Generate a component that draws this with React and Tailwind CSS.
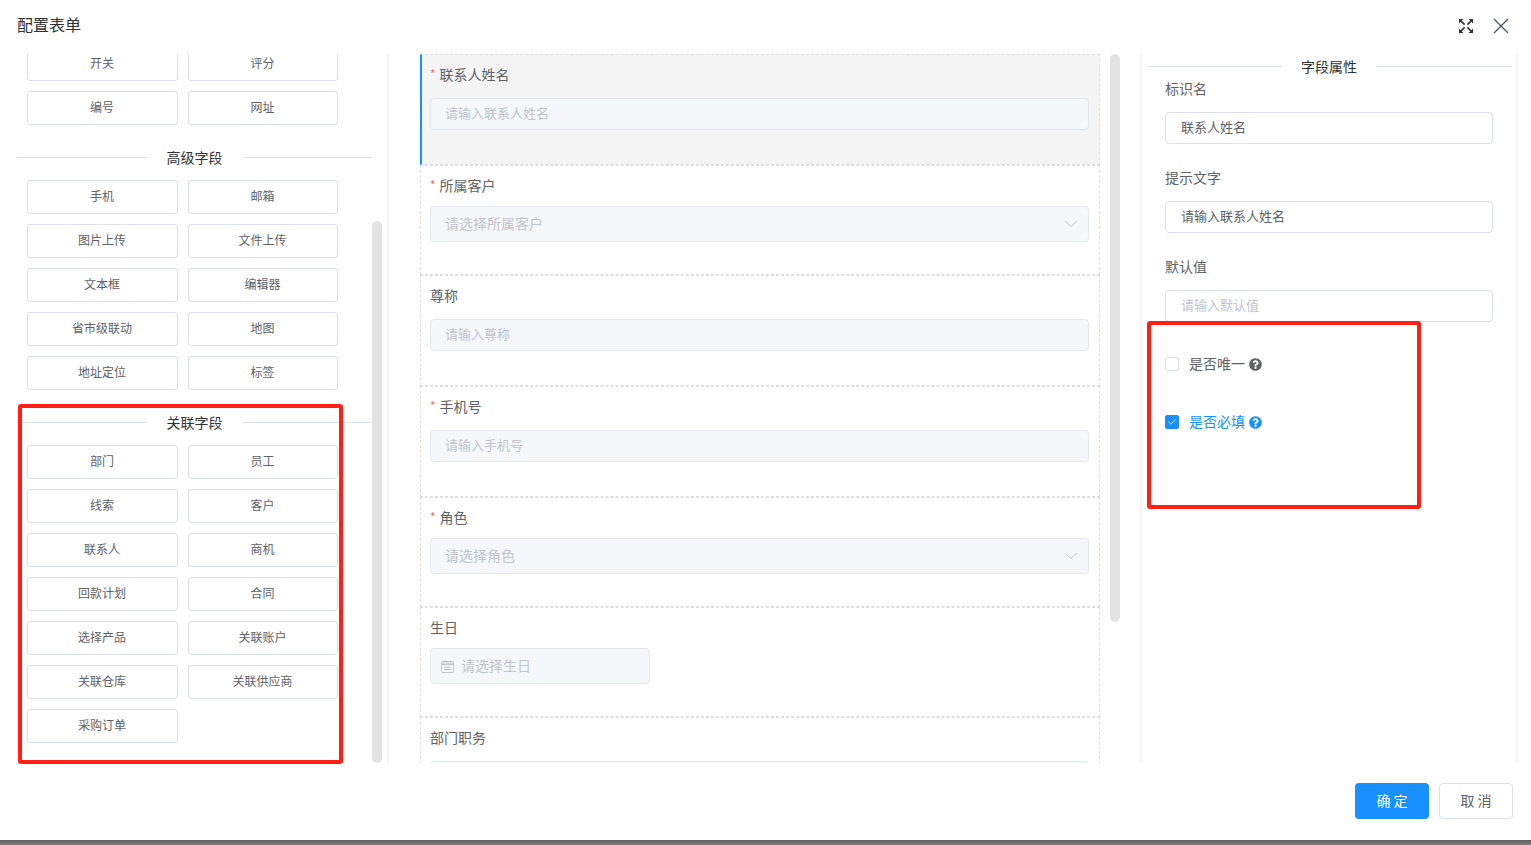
import { ChevronDown, Check } from 'lucide-react';
import { FaQuestionCircle } from 'react-icons/fa';

const basicTail = ['开关', '评分', '编号', '网址'];
const advanced = ['手机', '邮箱', '图片上传', '文件上传', '文本框', '编辑器', '省市级联动', '地图', '地址定位', '标签'];
const relation = ['部门', '员工', '线索', '客户', '联系人', '商机', '回款计划', '合同', '选择产品', '关联账户', '关联仓库', '关联供应商', '采购订单'];

const fields = [
  { label: '联系人姓名', required: true, type: 'input', placeholder: '请输入联系人姓名', active: true },
  { label: '所属客户', required: true, type: 'select', placeholder: '请选择所属客户' },
  { label: '尊称', type: 'input', placeholder: '请输入尊称' },
  { label: '手机号', required: true, type: 'input', placeholder: '请输入手机号' },
  { label: '角色', required: true, type: 'select', placeholder: '请选择角色' },
  { label: '生日', type: 'date', placeholder: '请选择生日' },
  { label: '部门职务', type: 'input', placeholder: '' },
];

function Divider({ title, className }) {
  return (
    <div className={`flex items-center ${className}`}>
      <div className="h-px flex-1 bg-[#dcdfe6]" />
      <span className="px-5 text-sm leading-5 text-[#303133]">{title}</span>
      <div className="h-px flex-1 bg-[#dcdfe6]" />
    </div>
  );
}

function ButtonGrid({ items }) {
  return (
    <div className="ml-[10px] grid grid-cols-[151px_150px] gap-x-[10px] gap-y-[10px]">
      {items.map((name) => (
        <button key={name} className="h-[34px] rounded-[3px] border border-[#dcdfe6] bg-white pb-[2px] pr-px text-xs text-[#606266]">
          {name}
        </button>
      ))}
    </div>
  );
}

function ExpandIcon() {
  return (
    <svg width="14" height="14" viewBox="0 0 14 14" fill="#303133" stroke="#303133">
      <path d="M0 0h4.5L0 4.5z" strokeWidth="0" />
      <path d="M14 0H9.5L14 4.5z" strokeWidth="0" />
      <path d="M0 14h4.5L0 9.5z" strokeWidth="0" />
      <path d="M14 14H9.5L14 9.5z" strokeWidth="0" />
      <path d="M2 2l3.6 3.6M12 2L8.4 5.6M2 12l3.6-3.6M12 12L8.4 8.4" strokeWidth="1.7" />
    </svg>
  );
}

function CalendarIcon() {
  return (
    <svg width="13" height="13" viewBox="0 0 13 13" fill="none" stroke="#c0c4cc">
      <rect x="0.5" y="1.5" width="12" height="11" rx="1" />
      <path d="M0.5 3h12M0.5 4.5h12M3 7h7M3 9.5h7" />
      <path d="M3.5 0v2M9.5 0v2" />
    </svg>
  );
}

function FieldRow({ field }) {
  const inputBox = 'rounded-[4px] border border-[#e4e7ed] bg-[#f5f7fa]';
  const height = field.type === 'input' ? 'h-[111px]' : 'h-[110px]';
  return (
    <div
      className={`${height} border-y border-r border-dashed border-[#dedede] pr-[10px] ${
        field.active
          ? 'border-l-2 bg-[#f4f4f4] pl-[8px] [border-left-color:#1890ff] [border-left-style:solid]'
          : 'border-l pl-[9px]'
      }`}
    >
      <div className="flex items-center pt-[9px] text-sm leading-5 text-[#606266]">
        {field.required && <span className="mr-1 text-xs text-[#f56c6c]">*</span>}
        {field.label}
      </div>
      {field.type === 'input' && (
        <input
          disabled
          placeholder={field.placeholder}
          className={`mt-[14px] block h-8 w-full pb-[4px] pl-[14px] pr-[15px] text-[13px] placeholder:text-[#c0c4cc] ${inputBox}`}
        />
      )}
      {field.type === 'select' && (
        <div className={`mt-[11px] flex h-9 w-full items-center justify-between pb-[2px] pl-[14px] pr-[6px] text-sm text-[#c0c4cc] ${inputBox}`}>
          <span>{field.placeholder}</span>
          <ChevronDown size={22} strokeWidth={1} className="mt-[2px]" />
        </div>
      )}
      {field.type === 'date' && (
        <div className={`mt-[11px] flex h-9 w-[220px] items-center gap-[7px] pl-[10px] text-[#c0c4cc] ${inputBox}`}>
          <CalendarIcon />
          <span className="-mt-[2px] text-sm">{field.placeholder}</span>
        </div>
      )}
    </div>
  );
}

function PropInput({ label, value, placeholder }) {
  return (
    <div className="mb-[23px]">
      <div className="mb-[14px] text-sm leading-5 text-[#606266]">{label}</div>
      <input
        readOnly
        value={value}
        placeholder={placeholder}
        className="block h-8 w-full rounded-[4px] border border-[#dcdfe6] bg-white pb-[4px] px-[15px] text-[13px] text-[#606266] placeholder:text-[#c0c4cc]"
      />
    </div>
  );
}

function CheckRow({ label, checked }) {
  return (
    <div className={`flex h-5 items-center text-sm ${checked ? 'text-[#1890ff]' : 'text-[#606266]'}`}>
      <span
        className={`mr-[10px] flex h-[14px] w-[14px] items-center justify-center rounded-[2px] border ${
          checked ? 'border-[#1890ff] bg-[#1890ff]' : 'border-[#dcdfe6] bg-white'
        }`}
      >
        {checked && <Check size={10} strokeWidth={2} color="white" />}
      </span>
      <span className="-mt-[2px]">{label}</span>
      <FaQuestionCircle size={13} className="ml-[4px]" />
    </div>
  );
}

export default function App() {
  return (
    <div className="relative flex h-[845px] w-[1531px] flex-col overflow-hidden bg-white font-['Noto_Sans_CJK_SC',sans-serif]">
      <div className="flex h-[54px] shrink-0 items-center justify-between pl-[17px] pr-[22px]">
        <span className="-mt-[6px] text-base text-[#303133]">配置表单</span>
        <div className="-mt-[3px] flex items-center gap-5">
          <ExpandIcon />
          <svg width="16" height="16" viewBox="0 0 16 16" stroke="#44566c" strokeWidth="1.3">
            <path d="M1 1l14 14M15 1L1 15" />
          </svg>
        </div>
      </div>

      <div className="flex h-[709px] shrink-0">
        <div className="flex w-[389px] shrink-0 overflow-hidden border-r-2 border-[#f4f4f6] pl-[17px]">
          <div className="-mt-[7px] w-[355px] shrink-0">
            <ButtonGrid items={basicTail} />
            <Divider title="高级字段" className="mt-[22px] mb-[13px]" />
            <ButtonGrid items={advanced} />
            <Divider title="关联字段" className="mt-[22px] mb-[13px]" />
            <ButtonGrid items={relation} />
          </div>
          <div className="mt-[167px] h-[542px] w-[10px] shrink-0 rounded-[5px] bg-[#e3e3e3]" />
        </div>

        <div className="flex w-[751px] shrink-0 overflow-hidden pl-[31px]">
          <div className="w-[680px] shrink-0">
            {fields.map((f) => (
              <FieldRow key={f.label} field={f} />
            ))}
          </div>
          <div className="ml-[10px] h-[568px] w-[10px] shrink-0 rounded-[5px] bg-[#e3e3e3]" />
        </div>

        <div className="h-full w-[378px] shrink-0 border-x-2 border-[#f4f4f6] px-[5px]">
          <Divider title="字段属性" className="mt-[2px]" />
          <div className="px-[18px] pt-[2px]">
            <PropInput label="标识名" value="联系人姓名" />
            <PropInput label="提示文字" value="请输入联系人姓名" />
            <PropInput label="默认值" value="" placeholder="请输入默认值" />
            <div className="mt-[32px] flex flex-col gap-[38px]">
              <CheckRow label="是否唯一" />
              <CheckRow label="是否必填" checked />
            </div>
          </div>
        </div>
      </div>

      <div className="flex flex-1 items-start justify-end gap-[10px] pr-[18px] pt-[20px]">
        <button className="h-9 w-[74px] rounded-[4px] bg-[#1890ff] pb-[2px] text-sm text-white">确 定</button>
        <button className="h-9 w-[74px] rounded-[4px] border border-[#dcdfe6] bg-white pb-[2px] text-sm text-[#606266]">取 消</button>
      </div>
      <div className="h-[5px] shrink-0 bg-gradient-to-b from-[#5c5c5c] to-[#808080]" />

      {/* annotation boxes drawn over the screenshot */}
      <div className="absolute left-[18px] top-[404px] h-[360px] w-[325px] rounded-[3px] border-4 border-[#ff2015]" />
      <div className="absolute left-[1147px] top-[321px] h-[188px] w-[274px] rounded-[3px] border-4 border-[#ff2015]" />
    </div>
  );
}
